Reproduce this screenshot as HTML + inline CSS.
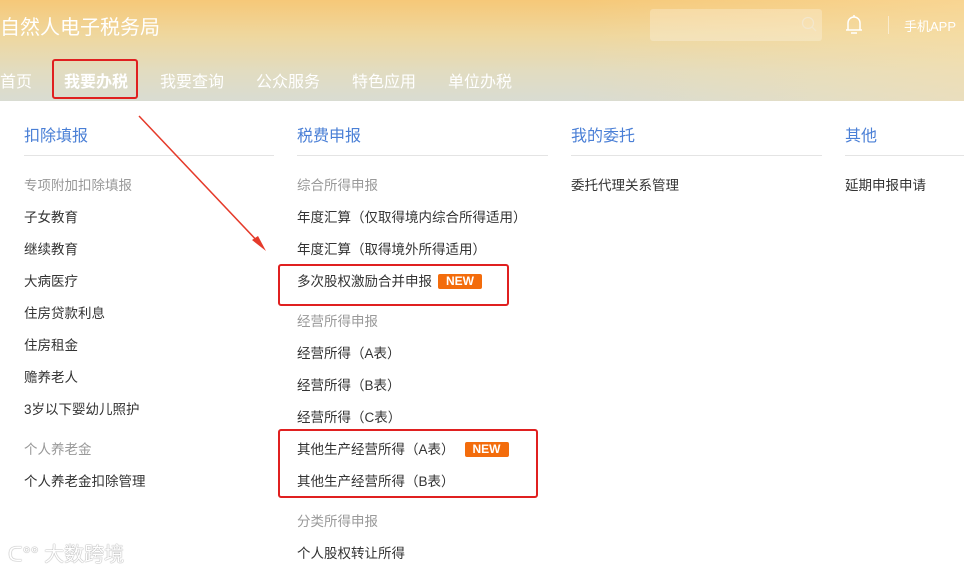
<!DOCTYPE html>
<html><head><meta charset="utf-8">
<style>
*{margin:0;padding:0;box-sizing:border-box}
body{width:964px;height:573px;overflow:hidden;background:#fff;font-family:"Liberation Sans","Noto Sans CJK SC",sans-serif;position:relative}
.hd{position:absolute;left:0;top:0;width:964px;height:101px;background:linear-gradient(180deg,#f6c878 0%,#efd79e 35%,#e2dcc0 70%,#d9dcd2 100%)}
.hd:after{content:"";position:absolute;inset:0;background:linear-gradient(90deg,rgba(255,255,255,0) 60%,rgba(250,225,170,.5) 100%)}
.t{position:absolute;color:#fff;white-space:nowrap}
.a{position:absolute;white-space:nowrap;font-size:13.5px;color:#333;line-height:16px}
.g{color:#999}
.h{position:absolute;font-size:16px;color:#4a7fd6;white-space:nowrap}
.ln{position:absolute;top:155px;height:1px;background:#e4e4e4}
.new{display:inline-block;background:#f36c0c;color:#fff;font-size:12px;font-weight:bold;padding:0 8px;line-height:15px;border-radius:2px;margin-left:6px;vertical-align:1px}
.box{position:absolute;border:2px solid #e02020;border-radius:3px}
</style></head><body>
<div class="hd"></div>
<div class="t" style="left:0;top:11px;font-size:20px">自然人电子税务局</div>
<div style="position:absolute;left:650px;top:9px;width:172px;height:32px;background:rgba(255,255,255,.25);border-radius:3px"></div>
<svg style="position:absolute;left:801px;top:16px" width="16" height="16"><circle cx="7" cy="7" r="5.5" fill="none" stroke="#f3e7cc" stroke-width="1.2"/><line x1="11" y1="11" x2="15" y2="15" stroke="#f3e7cc" stroke-width="1.2"/></svg>
<svg style="position:absolute;left:844px;top:13px" width="20" height="24"><path d="M4 17 V10 a6 6 0 0 1 12 0 V17 Z M2 17 H18 M10 2 V4 M7 20 H13" fill="none" stroke="#fff" stroke-width="1.5"/></svg>
<div style="position:absolute;left:888px;top:16px;width:1px;height:18px;background:rgba(255,255,255,.5)"></div>
<div class="t" style="left:904px;top:16px;font-size:13px">手机APP</div>
<div class="t" style="left:0;top:68px;font-size:16px">首页</div>
<div class="t" style="left:64px;top:68px;font-size:16px;font-weight:bold">我要办税</div>
<div class="t" style="left:160px;top:68px;font-size:16px">我要查询</div>
<div class="t" style="left:256px;top:68px;font-size:16px">公众服务</div>
<div class="t" style="left:352px;top:68px;font-size:16px">特色应用</div>
<div class="t" style="left:448px;top:68px;font-size:16px">单位办税</div>
<div class="box" style="left:52px;top:59px;width:86px;height:40px"></div>

<div class="h" style="left:24px;top:122px">扣除填报</div>
<div class="h" style="left:297px;top:122px">税费申报</div>
<div class="h" style="left:571px;top:122px">我的委托</div>
<div class="h" style="left:845px;top:122px">其他</div>
<div class="ln" style="left:24px;width:250px"></div>
<div class="ln" style="left:297px;width:251px"></div>
<div class="ln" style="left:571px;width:251px"></div>
<div class="ln" style="left:845px;width:119px"></div>

<div class="a g" style="left:24px;top:178px">专项附加扣除填报</div>
<div class="a" style="left:24px;top:210px">子女教育</div>
<div class="a" style="left:24px;top:242px">继续教育</div>
<div class="a" style="left:24px;top:274px">大病医疗</div>
<div class="a" style="left:24px;top:306px">住房贷款利息</div>
<div class="a" style="left:24px;top:338px">住房租金</div>
<div class="a" style="left:24px;top:370px">赡养老人</div>
<div class="a" style="left:24px;top:402px">3岁以下婴幼儿照护</div>
<div class="a g" style="left:24px;top:442px">个人养老金</div>
<div class="a" style="left:24px;top:474px">个人养老金扣除管理</div>

<div class="a g" style="left:297px;top:178px">综合所得申报</div>
<div class="a" style="left:297px;top:210px">年度汇算（仅取得境内综合所得适用）</div>
<div class="a" style="left:297px;top:242px">年度汇算（取得境外所得适用）</div>
<div class="a" style="left:297px;top:274px">多次股权激励合并申报<span class="new">NEW</span></div>
<div class="a g" style="left:297px;top:314px">经营所得申报</div>
<div class="a" style="left:297px;top:346px">经营所得（A表）</div>
<div class="a" style="left:297px;top:378px">经营所得（B表）</div>
<div class="a" style="left:297px;top:410px">经营所得（C表）</div>
<div class="a" style="left:297px;top:442px">其他生产经营所得（A表）<span class="new" style="margin-left:10px">NEW</span></div>
<div class="a" style="left:297px;top:474px">其他生产经营所得（B表）</div>
<div class="a g" style="left:297px;top:514px">分类所得申报</div>
<div class="a" style="left:297px;top:546px">个人股权转让所得</div>

<div class="a" style="left:571px;top:178px">委托代理关系管理</div>
<div class="a" style="left:845px;top:178px">延期申报申请</div>

<div class="box" style="left:278px;top:264px;width:231px;height:42px"></div>
<div class="box" style="left:278px;top:429px;width:260px;height:69px"></div>

<svg style="position:absolute;left:0;top:0" width="964" height="573">
<line x1="139" y1="116" x2="262" y2="246" stroke="#e53a2a" stroke-width="1.5"/>
<path d="M266 251 L252 240 L258 236 Z" fill="#e53a2a"/>
</svg>
<div style="position:absolute;left:8px;top:538px;font-size:20px;color:#fff;text-shadow:0 0 1px #999,0 0 1px #999;white-space:nowrap">ᑕ°° 大数跨境</div>
</body></html>
